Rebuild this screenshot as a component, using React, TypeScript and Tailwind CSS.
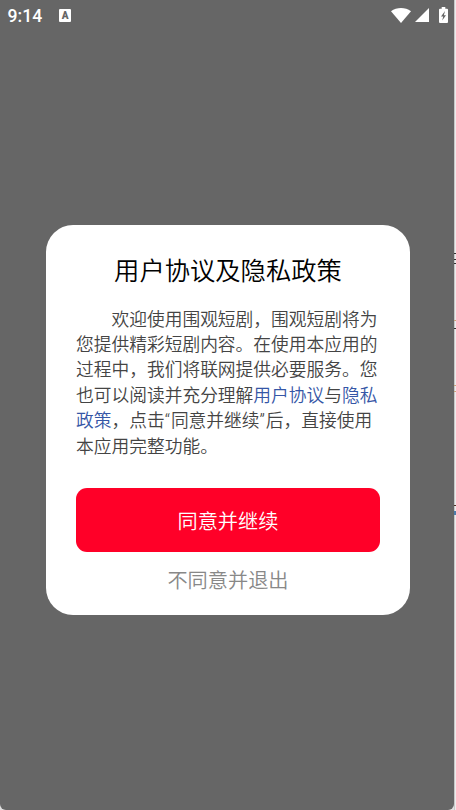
import { useState } from "react";

const POLICY_LINES_TOP = ["欢迎使用围观短剧，围观短剧将为", "您提供精彩短剧内容。在使用本应用的", "过程中，我们将联网提供必要服务。您"];

function StatusBar() {
  return (
    <header className="flex h-8 items-center justify-between pl-[7.5px] pr-[6.5px] text-white">
      <div className="flex items-center gap-[17px]">
        <span className="text-[17.6px] leading-8 font-medium">9:14</span>
        <span className="mb-px flex h-[13px] w-3 items-center justify-center rounded-[1px] bg-white text-[10px] leading-none font-black text-[#666]">
          A
        </span>
      </div>
      <div className="mb-[2px] flex items-center">
        <svg className="h-[15px] w-5" viewBox="0 0 20 15" fill="currentColor">
          <path d="M0 3.2C5.8-1 14.2-1 20 3.2L10 15Z" />
        </svg>
        <svg className="ml-[3.5px] h-[14px] w-[14px]" viewBox="0 0 14 14" fill="currentColor">
          <path d="M14 0V14H0Z" />
        </svg>
        <svg className="ml-[10px] h-4 w-[9px]" viewBox="0 0 9 16">
          <path d="M2.7 0H6.3V1.7H8Q9 1.7 9 2.7V15Q9 16 8 16H1Q0 16 0 15V2.7Q0 1.7 1 1.7H2.7Z" fill="currentColor" />
          <path d="M6 4L2 9.4H4.2L3.2 13.5L7 8.2H4.9Z" fill="#666" />
        </svg>
      </div>
    </header>
  );
}

// Sliver of the neighbouring window along the right side of the screen
function EdgeStrip() {
  return (
    <svg className="h-[810px] w-[2px] shrink-0" viewBox="0 0 2 810" shapeRendering="crispEdges">
      <rect width="1" height="810" fill="#c8c8c8" />
      <rect x="1" width="1" height="810" fill="#ececec" />
      <path d="M0 253.5H2M0 259.5H2M0 263.5H2M0 328.5H2" stroke="#333" />
      <path d="M0 320.5H2M0 385.5H2M0 391.5H2" stroke="#c9a27c" />
      <path d="M0 505.5H2" stroke="#4b3024" />
      <path d="M0 513H2" stroke="#4d7caa" strokeWidth="4" />
    </svg>
  );
}

export default function App() {
  const [agreed, setAgreed] = useState(false);

  return (
    <div className="flex h-[810px] w-[456px] overflow-hidden bg-[#e0e0e0] font-['Roboto','Noto_Sans_CJK_SC',sans-serif]">
      <div className="flex flex-1 flex-col rounded-b-[6px] bg-[#666]">
        <StatusBar />

        {!agreed && (
          <section className="mt-[193px] ml-[45.5px] flex h-[390px] w-[364.9px] flex-col rounded-[27px] bg-white px-[30.5px]">
            <h1 className="mt-[27.5px] text-center text-[25.3px] leading-[38px] font-[350] text-black">
              用户协议及隐私政策
            </h1>

            <p className="mt-[17px] indent-[2em] text-[17.74px] leading-[25.4px] font-[350] whitespace-nowrap text-[#444]">
              {POLICY_LINES_TOP.map((line) => (
                <span key={line}>
                  {line}
                  <br />
                </span>
              ))}
              也可以阅读并充分理解
              <a href="#terms" className="text-[#3556a6]">用户协议</a>与
              <a href="#privacy" className="text-[#3556a6]">
                隐私
                <br />
                政策
              </a>
              ，点击<span className="tracking-[0.9px]">“</span>同意并继续<span className="tracking-[0.9px]">”</span>后，直接使用
              <br />
              本应用完整功能。
            </p>

            <button
              onClick={() => setAgreed(true)}
              className="mt-[28.5px] h-[63.5px] w-full shrink-0 rounded-[11px] bg-[#ff0028] pt-[3px] text-[20.2px] font-[350] text-white"
            >
              同意并继续
            </button>
            <button className="mt-[14.5px] h-[30px] text-[20.2px] leading-[30px] font-[350] text-[#888]">
              不同意并退出
            </button>
          </section>
        )}
      </div>
      <EdgeStrip />
    </div>
  );
}
